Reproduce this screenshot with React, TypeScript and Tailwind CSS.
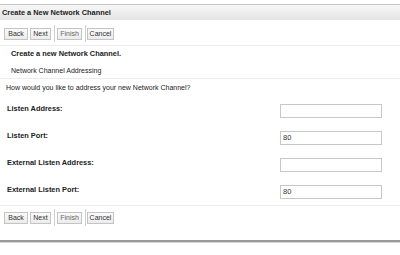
const font = { fontFamily: '"Liberation Sans", Arial, sans-serif' };

const btn = "h-[12px] border border-[#c4c4c4] bg-gradient-to-b from-[#fafafa] to-[#ececec] text-[7px] leading-none text-[#333] px-0";

const ButtonBar = () => (
    <div className="flex items-center h-[17px] pl-[4px]">
        <button className={`${btn} w-[24px]`}>Back</button>
        <button className={`${btn} ml-[2px] w-[21px]`}>Next</button>
        <div className="ml-[3px] h-[17px] w-px bg-[#d0d0d0]" />
        <button className={`${btn} ml-[2px] w-[25px] text-[#666]`}>Finish</button>
        <div className="ml-[3px] h-[17px] w-px bg-[#d0d0d0]" />
        <button className={`${btn} ml-[1px] w-[27px]`}>Cancel</button>
    </div>
);

const fields = [
    { label: "Listen Address:", value: "", mt: "mt-[9px]" },
    { label: "Listen Port:", value: "80", mt: "mt-[13px]" },
    { label: "External Listen Address:", value: "", mt: "mt-[13px]" },
    { label: "External Listen Port:", value: "80", mt: "mt-[13px]" },
];

export default function App() {
    return (
        <div className="w-[400px] h-[255px] bg-white text-[#222] overflow-hidden" style={font}>
            <div className="h-[4px]" />
            <div className="border-t border-[#c4c4c4] h-[16px] bg-gradient-to-b from-[#f7f7f7] to-[#e4e4e4] flex items-center pl-[2px]">
                <span className="text-[7.4px] font-bold leading-none">Create a New Network Channel</span>
            </div>
            <div className="mt-[5px]">
                <ButtonBar />
            </div>
            <div className="mt-[3px] border-t border-[#ececec]" />
            <div className="h-[16px] flex items-center pl-[11px] text-[7.4px] font-bold leading-none">Create a new Network Channel.</div>
            <div className="h-[16px] flex items-center pl-[11px] text-[7px] leading-none">Network Channel Addressing</div>
            <div className="border-t border-[#ececec]" />
            <div className="h-[16px] flex items-center pl-[6px] text-[7px] leading-none">How would you like to address your new Network Channel?</div>
            <div className="pl-[7px] pr-[18px]">
                {fields.map((f, i) => (
                    <div key={i} className={`flex items-center justify-between h-[14px] ${f.mt}`}>
                        <span className="text-[7.4px] font-bold leading-none -mt-[4px]">{f.label}</span>
                        <div className="w-[102px] h-[14px] border border-[#c8c8c8] bg-white text-[7.5px] leading-[12px] pl-[2px] text-[#333]">{f.value}</div>
                    </div>
                ))}
            </div>
            <div className="mt-[6px] border-t border-[#ececec]" />
            <div className="mt-[3px]">
                <ButtonBar />
            </div>
            <div className="mt-[14px] h-[2px] bg-[#9a9a9a]" />
            <div className="h-[1px] bg-[#d8d8d8]" />
        </div>
    );
}
